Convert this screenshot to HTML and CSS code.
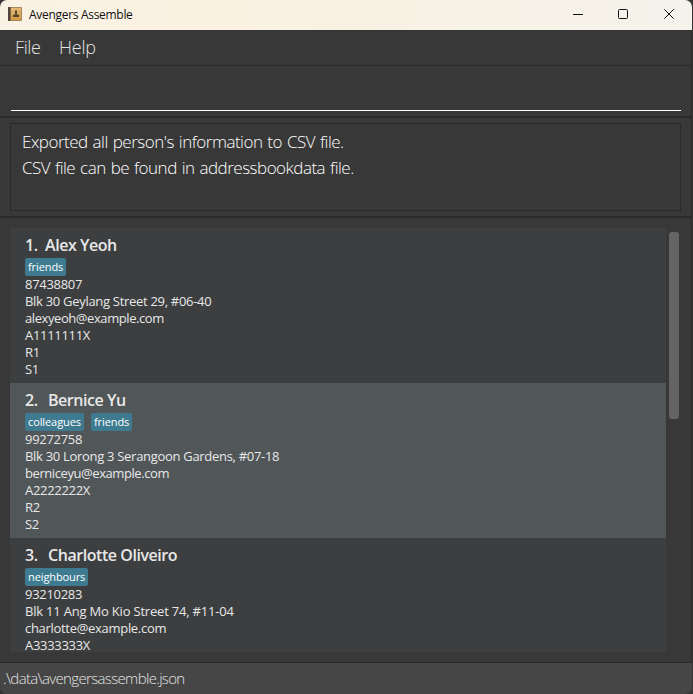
FILE: index.html
```html
<!DOCTYPE html>
<html lang="en">
<head>
<meta charset="utf-8">
<title>Avengers Assemble</title>
<link rel="stylesheet" href="styles.css">
</head>
<body>
<div class="window">
  <header class="titlebar">
    <svg class="app-icon" width="14" height="14" viewBox="0 0 14 14">
      <defs><linearGradient id="cover" x1="0" y1="0" x2="0" y2="1"><stop offset="0" stop-color="#e3b973"/><stop offset="1" stop-color="#d09a45"/></linearGradient></defs>
      <rect width="14" height="14" rx="1" fill="#a88655"/>
      <rect width="2.5" height="14" rx=".5" fill="#54443a"/>
      <rect x="3" y="1" width="10" height="12" fill="url(#cover)"/>
      <path d="M7 3.500h2v2.500l-.4 1.200 2.400.8V10H5V8l2.400-.8L7 6z" fill="#57422a"/>
    </svg>
    <span class="title">Avengers Assemble</span>
    <svg class="controls" width="104" height="12" viewBox="0 0 104 12" fill="none" stroke="#111">
      <path d="M0 6.500h10"/>
      <rect x="45.500" y="1.500" width="9" height="9" rx="1"/>
      <path d="M91.300 1.300l9.400 9.400M100.700 1.300l-9.400 9.400"/>
    </svg>
  </header>
  <nav class="menubar"><span class="file">File</span><span class="help">Help</span></nav>
  <section class="command"><div class="command-field"></div></section>
  <section class="result"><div class="result-box">
    <p class="line-one">Exported all person's information to CSV file.</p>
    <p class="line-two">CSV file can be found in addressbookdata file.</p>
  </div></section>
  <main class="content">
    <div class="list">
      <article class="card">
        <h2><span class="index narrow">1.</span><span class="name">Alex Yeoh</span></h2>
        <div class="tags"><span class="tag">friends</span></div>
        <p>87438807</p><p>Blk 30 Geylang Street 29, #06-40</p><p class="email">alexyeoh@example.com</p><p>A1111111X</p><p>R1</p><p>S1</p>
      </article>
      <article class="card alt">
        <h2><span class="index">2.</span><span class="name">Bernice Yu</span></h2>
        <div class="tags"><span class="tag colleagues">colleagues</span><span class="tag">friends</span></div>
        <p>99272758</p><p>Blk 30 Lorong 3 Serangoon Gardens, #07-18</p><p class="email">berniceyu@example.com</p><p>A2222222X</p><p>R2</p><p>S2</p>
      </article>
      <article class="card">
        <h2><span class="index">3.</span><span class="name">Charlotte Oliveiro</span></h2>
        <div class="tags"><span class="tag neighbours">neighbours</span></div>
        <p>93210283</p><p class="wide">Blk 11 Ang Mo Kio Street 74, #11-04</p><p>charlotte@example.com</p><p>A3333333X</p>
      </article>
    </div>
    <div class="scrollbar"><div class="thumb"></div></div>
  </main>
  <footer class="status">.\data\avengersassemble.json</footer>
</div>
</body>
</html>
```

FILE: styles.css
```css
* { box-sizing: border-box; }
body { margin: 0; background: #353535; font-family: "Open Sans", "Noto Sans", sans-serif; overflow: hidden; }
h2, p { margin: 0; }
.window { width: 692px; height: 694px; display: flex; flex-direction: column; background: #383838; border-radius: 7px; overflow: hidden; white-space: nowrap; }
.titlebar { height: 30px; flex: none; display: flex; align-items: center; padding: 0 17px 0 8px; background: linear-gradient(90deg, #f9f2e4, #fbf1e1 30%, #f7f2e4 60%, #f5f2ec); }
.app-icon { margin-top: -2px; }
.title { margin: -2px 0 0 7px; font-size: 12px; letter-spacing: -.3px; color: #111; }
.controls { margin: -2px -2px 0 auto; }
.menubar { height: 36px; flex: none; display: flex; gap: 18px; padding: 0 15px; border-bottom: 1px solid #292929; border-right: 1px solid #2b2b2b; font-size: 18px; line-height: 35px; font-weight: 300; color: #e4e4e4; }
.file { width: 26px; letter-spacing: -.4px; }
.help { letter-spacing: -.2px; }
.command { height: 52px; flex: none; padding: 0 10px 0 11px; border-bottom: 2px solid #2a2a2a; border-right: 1px solid #2b2b2b; }
.command-field { height: 45px; border-bottom: 1px solid #fff; }
.result { height: 100px; flex: none; padding: 5px 10px; border-bottom: 2px solid #2a2a2a; border-right: 1px solid #2b2b2b; }
.result-box { height: 88px; border: 1px solid #292929; padding: 5px 11px; font-size: 17px; line-height: 26px; font-weight: 300; color: #fff; }
.line-one, .line-two { letter-spacing: -.5px; word-spacing: 1px; }
.content { height: 444px; flex: none; display: flex; padding: 10px 0; border-right: 1px solid #2b2b2b; }
.list { width: 656px; height: 424px; margin-left: 10px; overflow: hidden; background: #3c3e3f; }
.card { height: 155px; padding: 5px 15px; font-size: 13px; line-height: 17px; color: #e8e8e8; background: #3c3e3f; }
.alt { background: #515658; }
.card p { letter-spacing: -.3px; }
.card .email { letter-spacing: -.42px; }
.card .wide { letter-spacing: -.2px; }
.card h2 { display: flex; font-size: 16px; line-height: 24px; font-weight: 600; letter-spacing: -.45px; }
.index { width: 23px; }
.narrow { width: 20px; }
.tags { display: flex; gap: 7px; margin: 1px 0 0; height: 18px; }
.tag { height: 18px; padding: 0 3px; border-radius: 2px; background: #3e7b91; font-size: 11px; line-height: 18px; color: #fff; width: 41px; letter-spacing: -.1px; }
.colleagues { width: 59px; }
.neighbours { width: 63px; }
.scrollbar { margin: 4px 0 0 3px; }
.thumb { width: 10px; height: 187px; border-radius: 3px; background: #646464; }
.status { flex: 1; padding-left: 3px; border-top: 1px solid #292929; background: #464646; font-size: 15px; line-height: 31px; font-weight: 300; letter-spacing: -.66px; color: #e4e4e4; }
```
